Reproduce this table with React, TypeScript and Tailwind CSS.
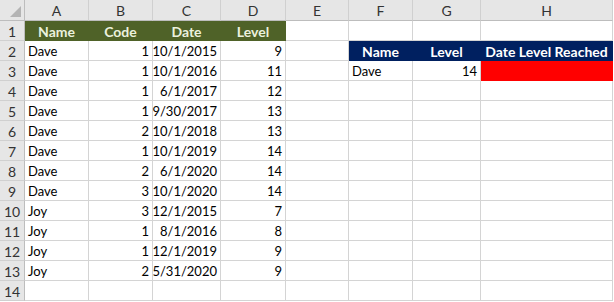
const cols = ['A', 'B', 'C', 'D', 'E', 'F', 'G', 'H']

type Cell = { v?: string; align?: 'l' | 'r' | 'c'; cls?: string }

const green = 'bg-[#4f6228] text-[#ebf1de] font-bold text-[14px] border-[#4f6228]'
const navy = 'bg-[#002060] text-white font-bold text-[14px] border-[#002060]'

const rows: Cell[][] = [
  [
    { v: 'Name', align: 'c', cls: green },
    { v: 'Code', align: 'c', cls: green },
    { v: 'Date', align: 'c', cls: green },
    { v: 'Level', align: 'c', cls: green },
    {}, {}, {}, {},
  ],
]

const data: [string, string, string, string][] = [
  ['Dave', '1', '10/1/2015', '9'],
  ['Dave', '1', '10/1/2016', '11'],
  ['Dave', '1', '6/1/2017', '12'],
  ['Dave', '1', '9/30/2017', '13'],
  ['Dave', '2', '10/1/2018', '13'],
  ['Dave', '1', '10/1/2019', '14'],
  ['Dave', '2', '6/1/2020', '14'],
  ['Dave', '3', '10/1/2020', '14'],
  ['Joy', '3', '12/1/2015', '7'],
  ['Joy', '1', '8/1/2016', '8'],
  ['Joy', '1', '12/1/2019', '9'],
  ['Joy', '2', '5/31/2020', '9'],
]

data.forEach((d, i) => {
  const r: Cell[] = [
    { v: d[0] },
    { v: d[1], align: 'r' },
    { v: d[2], align: 'r' },
    { v: d[3], align: 'r' },
    {}, {}, {}, {},
  ]
  if (i === 0) {
    r[5] = { v: 'Name', align: 'c', cls: navy }
    r[6] = { v: 'Level', align: 'c', cls: navy }
    r[7] = { v: 'Date Level Reached', align: 'c', cls: navy }
  }
  if (i === 1) {
    r[5] = { v: 'Dave' }
    r[6] = { v: '14', align: 'r' }
    r[7] = { cls: 'bg-[#ff0000] border-[#ff0000]' }
  }
  rows.push(r)
})
rows.push([{}, {}, {}, {}, {}, {}, {}, {}])

export default function App() {
  return (
    <div
      className="w-[614px] h-[302px] bg-white overflow-hidden text-[13px] text-black"
      style={{ fontFamily: 'Lato, "Open Sans", sans-serif' }}>
      <div className="grid grid-cols-[25px_64px_64px_68px_65px_63px_64px_68px_132px] grid-rows-[21px_repeat(14,20px)]">
        <div className="relative bg-[#e6e6e6] border-r border-b border-[#bdbdbd]">
          <svg className="absolute right-[3px] bottom-[3px]" width="11" height="11" viewBox="0 0 11 11">
            <polygon points="11,0 11,11 0,11" fill="#b4b4b4" />
          </svg>
        </div>
        {cols.map((c) => (
          <div
            key={c}
            className="flex items-center justify-center pt-[1px] bg-[#e6e6e6] border-r border-b border-r-[#d0d0d0] border-b-[#bdbdbd] text-[#333] text-[14px]">
            {c}
          </div>
        ))}
        {rows.map((r, ri) => (
          <div key={ri} className="contents">
            <div className="flex items-center justify-center pt-[1px] bg-[#e6e6e6] border-r border-b border-r-[#bdbdbd] border-b-[#d0d0d0] text-[#333] text-[14px]">
              {ri + 1}
            </div>
            {r.map((cell, ci) => (
              <div
                key={ci}
                className={`flex items-center pt-[2px] whitespace-nowrap px-[3px] border-r border-b ${
                  cell.cls ?? 'border-[#d4d4d4]'
                } ${cell.align === 'r' ? 'justify-end' : cell.align === 'c' ? 'justify-center' : 'justify-start'}`}>
                {cell.v}
              </div>
            ))}
          </div>
        ))}
      </div>
    </div>
  )
}
